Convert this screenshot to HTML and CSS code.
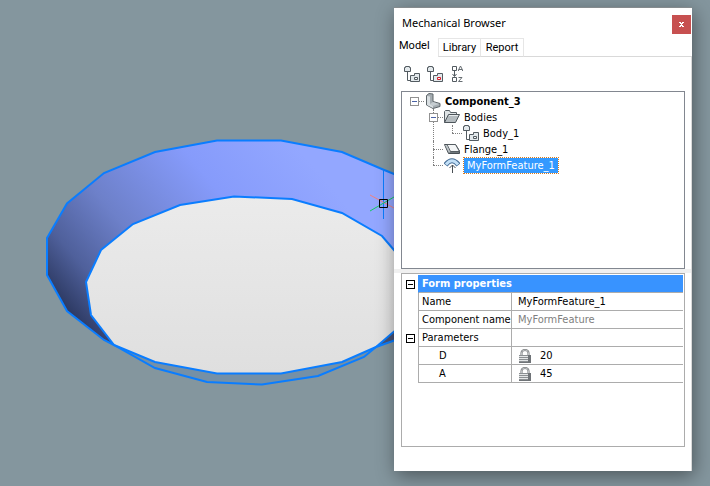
FILE: index.html
```html
<!DOCTYPE html>
<html lang="en">
<head>
<meta charset="utf-8">
<title>Mechanical Browser</title>
<link rel="stylesheet" href="styles.css">
</head>
<body>
<svg class="defs" aria-hidden="true">
  <symbol id="body" viewBox="0 0 16 16">
    <path d="M3.500 6v8.500h3" fill="none" stroke="#535b61"/>
    <path d="M.5 5.500v-4h1v-1h4v1h1v4zM6.500 15.500v-6h4v-2h5v8z" fill="#e3e9ec" stroke="#535b61"/>
    <path d="M10.500 11.500h3v2h-3z" fill="#f4f6f7" stroke="currentColor"/>
  </symbol>
  <symbol id="lock" viewBox="0 0 12 14">
    <path d="M2.500 7V4a3.500 3 0 0 1 7 0v3" fill="none" stroke="#6f7376" stroke-width="2"/>
    <path d="M2.500 7V4a3.500 3 0 0 1 7 0v3" fill="none" stroke="#d5d7d8" stroke-width=".8"/>
    <path d="M0 6h12v8H0z" fill="#8b8f92"/>
    <path d="M0 7h9v1H0zM0 9h9v1H0zM0 11h9v1H0z" fill="#e3e5e6"/>
    <path d="M9 6h3v8H9zM0 13h12v1H0z" fill="#54585b" opacity=".5"/>
  </symbol>
</svg>

<main class="workspace">
  <svg class="scene" viewBox="0 0 710 486" preserveAspectRatio="xMinYMin slice" role="img" aria-label="Ring model">
    <defs>
      <linearGradient id="ring" gradientUnits="userSpaceOnUse" x1="80" y1="335" x2="300" y2="150">
        <stop offset="0" stop-color="#28345a"/>
        <stop offset=".16" stop-color="#4f609b"/>
        <stop offset=".36" stop-color="#6d80c9"/>
        <stop offset=".69" stop-color="#869bfb"/>
        <stop offset="1" stop-color="#93a7ff"/>
      </linearGradient>
      <linearGradient id="hole" x2="0" y2="1">
        <stop offset="0" stop-color="#ebebeb"/>
        <stop offset="1" stop-color="#dfdfdf"/>
      </linearGradient>
    </defs>
    <path fill="#7590a6" d="M114 345l41 23 52 14 55 2.500 56-8.500 46-19 12-10-34 15-61 11.500h-64L155 362z"/>
    <path fill="url(#ring)" d="M114 345l-10-5-37-29-20-36v-37l20-34.500L104 173l51-21 62-11.500h64L342 152l41 17.500 47 20V300l-36-50-12-14-40-23-50-14-58-2.500-54 8.500-47 19-32 26-15 32 5 33z"/>
    <path fill="url(#hole)" d="M114 345l-23-30-5-33 15-32 32-26 47-19 54-8.500 58 2.500 50 14 40 23 12 14v82l-18 15-34 15-61 11.500h-64L155 362z"/>
    <path fill="#4a5272" d="M376 347l18-15h10v8h-10z"/>
    <g fill="none" stroke="#0a7dff" stroke-width="2">
      <path d="M404 178l-21-8.500L342 152l-61-11.500h-64L155 152l-51 21-37 30.500L47 238v37l20 36 37 29 10 5 41 17 62 11.500h64L342 362l34-15 28-10"/>
      <path d="M404 262l-10-12-12-14-40-23-50-14-58-2.500-54 8.500-47 19-32 26-15 32 5 33 23 30 41 23 52 14 55 2.500 56-8.500 46-19 12-10 28-24"/>
      <path stroke-width="1" d="M383.500 170v49"/>
    </g>
    <path fill="none" stroke="#f08282" d="M370 195l24 13"/>
    <path fill="none" stroke="#13c863" d="M370 211l24-14"/>
    <path fill="none" stroke="#000" d="M379.500 199.500h8v8h-8z"/>
  </svg>

  <section class="panel">
    <header class="titlebar">
      <h1 class="title">Mechanical Browser</h1>
      <button class="close" aria-label="Close"><svg width="5" height="5" viewBox="0 0 5 5"><path d="M0 0h2v1h1V0h2v1H4v1H3v1h1v1h1v1H3V4H2v1H0V4h1V3h1V2H1V1H0z" fill="#fff"/></svg></button>
    </header>

    <nav class="tabs">
      <button class="tab active">Model</button>
      <button class="tab">Library</button>
      <button class="tab">Report</button>
    </nav>

    <div class="content">
      <div class="toolbar">
        <button class="tool" aria-label="Show bodies"><svg class="icon"><use href="#body"/></svg></button>
        <button class="tool red" aria-label="Hide bodies"><svg class="icon"><use href="#body"/></svg></button>
        <button class="tool" aria-label="Sort A to Z"><svg class="icon" viewBox="0 0 16 16"><path d="M2.500.500h4v4h-4zM2.500 11.500h4v4h-4zM4.500 5v5M2.500 8l2 2.500 2-2.500" fill="none" stroke="#535b61"/><path d="M8.500 5V4l2-4 2 4v1M9 3.500h3M8.500 11.500h3.500l-3.500 4h4" fill="none" stroke="#666d72"/></svg></button>
      </div>

      <div class="tree">
        <ul class="branch root">
          <li class="node">
            <div class="row"><button class="expander" aria-label="Collapse"></button>
              <svg class="icon" viewBox="0 0 16 16"><path d="M1.500 2.500L4 .500l4 .500v7.500l7 2v3l-7 2-6.500-3.500z" fill="#a4acb1" stroke="#5e666b"/><path d="M2 3l3 .500V11l3 2v2l-6-3z" fill="#d9dfe2"/><path d="M5 11l3-2 6 2-6 2z" fill="#c6cdd1"/></svg>
              <strong class="label">Component_3</strong></div>
            <ul class="branch">
              <li class="node">
                <div class="row"><button class="expander" aria-label="Collapse"></button>
                  <svg class="icon" viewBox="0 0 16 16"><path d="M.500 13.500v-11l1-1h4l1 2h6v2" fill="#dfe4e6" stroke="#596167"/><path d="M.500 13.500l4-8h11l-4 8z" fill="#b5bcc0" stroke="#4d555a"/><path d="M5 6.500h9" stroke="#e7ebed"/></svg>
                  <span class="label">Bodies</span></div>
                <ul class="branch">
                  <li class="node"><div class="row"><span class="stem"></span><svg class="icon"><use href="#body"/></svg><span class="label">Body_1</span></div></li>
                </ul>
              </li>
              <li class="node"><div class="row"><span class="stem"></span>
                <svg class="icon" viewBox="0 0 16 16"><path d="M.500 3.500l4 9h11V10l-4-6.500z" fill="#71797e" stroke="#484f54"/><path d="M3 3.500h8.500l4 7H6.500z" fill="#f3f5f6" stroke="#555d62"/><path d="M1 4h2l3 6.500-1 1.500z" fill="#bfc6ca"/></svg>
                <span class="label">Flange_1</span></div></li>
              <li class="node"><div class="row"><span class="stem"></span>
                <svg class="icon" viewBox="0 0 16 16"><path d="M1.500 8Q8-.500 14.500 8" fill="none" stroke="#456d96" stroke-width="5"/><path d="M2 7.500Q8 0 14 7.500" fill="none" stroke="#c3e0f7" stroke-width="3"/><path d="M8.500 16V8M5.500 11l3-3 3 3" fill="none" stroke="#484f54"/></svg>
                <span class="label selected">MyFormFeature_1</span></div></li>
            </ul>
          </li>
        </ul>
      </div>

      <div class="divider"></div>

      <div class="properties">
        <table class="grid">
          <colgroup><col class="gutter"><col class="names"><col></colgroup>
          <tbody>
            <tr><td class="fold"><button class="toggle" aria-label="Collapse form properties"></button></td><th class="heading" colspan="2">Form properties</th></tr>
            <tr><td class="fold"></td><th><label for="name">Name</label></th><td><input class="field" id="name" value="MyFormFeature_1"></td></tr>
            <tr><td class="fold"></td><th><label for="component">Component name</label></th><td><input class="field" id="component" value="MyFormFeature" disabled></td></tr>
            <tr><td class="fold"><button class="toggle" aria-label="Collapse parameters"></button></td><th>Parameters</th><td></td></tr>
            <tr><td class="fold"></td><th class="parameter"><label for="d">D</label></th><td><div class="value"><svg class="lock"><use href="#lock"/></svg><input class="field" id="d" value="20"></div></td></tr>
            <tr><td class="fold"></td><th class="parameter"><label for="a">A</label></th><td><div class="value"><svg class="lock"><use href="#lock"/></svg><input class="field" id="a" value="45"></div></td></tr>
          </tbody>
        </table>
      </div>
    </div>
  </section>
</main>
</body>
</html>
```
FILE: styles.css
```css
* { box-sizing: border-box; }

body {
  margin: 0;
  background: #84969e;
  color: #000;
  font: 11px/16px "DejaVu Sans Condensed", "DejaVu Sans", sans-serif;
}

button {
  margin: 0;
  padding: 0;
  border: 0;
  background: none;
  color: inherit;
  font: inherit;
}

svg { display: block; flex: none; }
.defs { position: absolute; width: 0; height: 0; }

.workspace {
  position: relative;
  display: flex;
  justify-content: flex-end;
  min-height: 100vh;
  padding: 7px 18px 15px;
}

.scene { position: absolute; inset: 0; width: 100%; height: 100%; }

.panel {
  position: relative;
  display: flex;
  flex-direction: column;
  width: 42%;
  min-width: 298px;
  border-top: 1px solid #858b8e;
  background: #fff;
  box-shadow: 2px 5px 18px rgba(0, 0, 0, .42);
}

.titlebar {
  display: flex;
  justify-content: space-between;
  padding: 7px 1px 0 8px;
}

.title {
  margin: 0;
  font: 11px/16px "Noto Sans", sans-serif;
}

.close {
  display: grid;
  place-items: center;
  width: 19px;
  height: 19px;
  background: #c75050;
}

.tabs {
  display: flex;
  align-items: flex-end;
  height: 23px;
  font: 11px/16px Roboto, sans-serif;
}

.tabs::after { content: ""; flex: 1; border-bottom: 1px solid #d9d9d9; }

.tab {
  min-width: 43px;
  height: 19px;
  padding: 0 3px;
  border: 1px solid #e6e6e6;
  border-left-width: 0;
  border-bottom-color: #d9d9d9;
}

.tab.active {
  min-width: 44px;
  height: 23px;
  padding: 0 3px 0 5px;
  border-width: 0;
  text-align: left;
}

.tab.active + .tab { border-left-width: 1px; }

.content {
  display: flex;
  flex: 1;
  flex-direction: column;
  padding: 9px 6px 24px 7px;
  border-right: 1px solid #d9d9d9;
}

.toolbar { display: flex; gap: 7px; padding: 0 3px 9px; }
.icon { width: 16px; height: 16px; }
.tool { color: #535b61; }
.tool.red { color: #d81e2c; }

.tree {
  flex: 1;
  min-height: 178px;
  padding: 1px 3px;
  border: 1px solid #828790;
}

.branch { margin: 0; padding: 0 0 0 19px; list-style: none; }
.branch.root { padding: 0; }
.node { position: relative; color: #535b61; }

.node::before {
  content: "";
  position: absolute;
  top: 0;
  bottom: 0;
  left: 9px;
  border-left: 1px dotted #808080;
}

.node:last-child::before { bottom: auto; height: 8px; }
.root > .node::before { display: none; }

.row { display: flex; align-items: center; height: 16px; }

.row::before {
  content: "";
  position: absolute;
  top: 8px;
  left: 9px;
  width: 10px;
  border-top: 1px dotted #808080;
}

.row .icon { margin-left: 1px; }
.stem { width: 19px; }

.expander, .toggle {
  position: relative;
  display: block;
  width: 9px;
  height: 9px;
  border: 1px solid #919191;
  background: #fff;
}

.expander { margin: 0 5px; }

.expander::before, .toggle::before {
  content: "";
  position: absolute;
  top: 3px;
  left: 1px;
  right: 1px;
  border-top: 1px solid #4b63a7;
}

.label {
  margin-left: 2px;
  padding: 2px 2px 0;
  color: #000;
  line-height: 14px;
}

.label.selected {
  margin-left: 4px;
  padding: 1px 3px 0;
  outline: 1px dotted #d87a1c;
  background: #3399ff;
  color: #fff;
}

.divider {
  height: 4px;
  margin-right: -6px;
  margin-left: -7px;
  background: #f0f0f0;
}

.properties {
  min-height: 174px;
  padding: 1px;
  border: 1px solid #acacac;
}

.grid {
  width: 100%;
  border-spacing: 0;
  table-layout: fixed;
}

.gutter { width: 15px; }
.names { width: 93px; }

.grid th, .grid td {
  height: 18px;
  padding: 1px 0 0;
  border-bottom: 1px solid #acacac;
  border-left: 1px solid #acacac;
  font-weight: normal;
  text-align: left;
}

.grid th { padding-left: 3px; white-space: nowrap; }
.grid .fold { padding: 0; border: 0; }

.grid .heading {
  border-left-color: #3893ff;
  background: #3893ff;
  color: #fff;
  font-weight: bold;
}

.grid .parameter { padding-left: 20px; }

.toggle { margin-left: 3px; border-color: #000; }
.toggle::before { border-color: #000; }

.field {
  display: block;
  width: 100%;
  height: 16px;
  padding: 0 6px;
  border: 0;
  background: none;
  color: #000;
  font: inherit;
}

.field:disabled { color: #808080; }

.value { display: flex; align-items: center; padding-left: 7px; }
.value .field { flex: 1; min-width: 0; padding-left: 9px; }
.lock { width: 12px; height: 14px; }
```
